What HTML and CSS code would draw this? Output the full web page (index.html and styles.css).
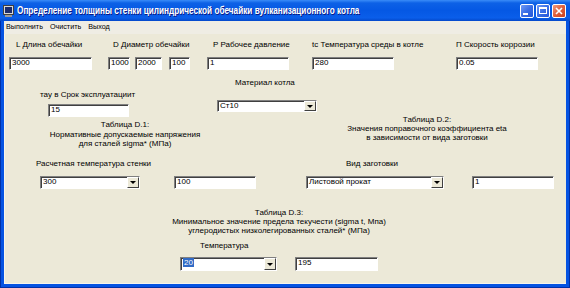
FILE: index.html
```html
<!DOCTYPE html>
<html lang="ru">
<head>
<meta charset="utf-8">
<title>Определение толщины стенки</title>
<link rel="stylesheet" href="styles.css">
</head>
<body>
<div class="window">
  <div class="titlebar">
    <svg class="app-icon" width="11" height="12" viewBox="0 0 11 12">
      <rect x="0.5" y="0.5" width="10" height="9" fill="#d8d8d8" stroke="#404040"/>
      <rect x="2" y="2" width="7" height="6" fill="#1c2c6c"/>
      <rect x="2" y="10" width="7" height="2" fill="#9a9a9a"/>
    </svg>
    <span class="title">Определение толщины стенки цилиндрической обечайки вулканизационного котла</span>
    <div class="caption-buttons">
      <span class="cbtn cbtn-min"><span class="glyph-min"></span></span>
      <span class="cbtn cbtn-max"><span class="glyph-max"></span></span>
      <span class="cbtn cbtn-close">
        <svg width="8" height="8" viewBox="0 0 8 8"><path d="M1 1 L7 7 M7 1 L1 7" stroke="#fff" stroke-width="1.6"/></svg>
      </span>
    </div>
  </div>
  <div class="menubar">
    <span class="menu-item">Выполнить</span>
    <span class="menu-item">Очистить</span>
    <span class="menu-item">Выход</span>
  </div>
  <div class="client">
    <div class="row row-top">
      <div class="group g-len">
        <div class="label">L Длина обечайки</div>
        <div class="field">3000</div>
      </div>
      <div class="group g-dia">
        <div class="label">D Диаметр обечайки</div>
        <div class="fields">
          <div class="field f-d1">1000</div>
          <div class="field f-d2">2000</div>
          <div class="field f-d3">100</div>
        </div>
      </div>
      <div class="group g-press">
        <div class="label">P Рабочее давление</div>
        <div class="field">1</div>
      </div>
      <div class="group g-temp">
        <div class="label">tc Температура среды в котле</div>
        <div class="field">280</div>
      </div>
      <div class="group g-corr">
        <div class="label">П Скорость коррозии</div>
        <div class="field">0.05</div>
      </div>
    </div>

    <div class="row row-mid">
      <div class="col col-left">
        <div class="label lbl-tau">тау в Срок эксплуатациит</div>
        <div class="field f-tau">15</div>
        <div class="note note-d1">Таблица D.1:<br>Нормативные допускаемые напряжения<br>для сталей sigma* (МПа)</div>
      </div>
      <div class="col col-material">
        <div class="label lbl-mat">Материал котла</div>
        <div class="combo c-mat"><span class="val">Ст10</span><span class="drop"></span></div>
      </div>
      <div class="col col-right">
        <div class="note note-d2">Таблица D.2:<br>Значения поправочного коэффициента eta<br>в зависимости от вида заготовки</div>
      </div>
    </div>

    <div class="row row-calc">
      <div class="group g-wall">
        <div class="label">Расчетная температура стенки</div>
        <div class="combo c-wall"><span class="val">300</span><span class="drop"></span></div>
      </div>
      <div class="group g-wallval">
        <div class="label"></div>
        <div class="field">100</div>
      </div>
      <div class="group g-blank">
        <div class="label">Вид заготовки</div>
        <div class="combo"><span class="val">Листовой прокат</span><span class="drop"></span></div>
      </div>
      <div class="group g-eta">
        <div class="label"></div>
        <div class="field">1</div>
      </div>
    </div>

    <div class="note note-d3">Таблица D.3:<br>Минимальное значение предела текучести (sigma t, Мпа)<br>углеродистых низколегированных сталей* (МПа)</div>

    <div class="row row-yield">
      <div class="group g-ytemp">
        <div class="label">Температура</div>
        <div class="combo c-tall"><span class="val"><span class="sel">20</span></span><span class="drop"></span></div>
      </div>
      <div class="group g-yval">
        <div class="label"></div>
        <div class="field f-tall">195</div>
      </div>
    </div>
  </div>
</div>
</body>
</html>
```

FILE: styles.css
```css
* { box-sizing: border-box; margin: 0; padding: 0; }

html, body {
  width: 570px;
  height: 288px;
  overflow: hidden;
}

body {
  font-family: "Liberation Sans", Arial, sans-serif;
  font-size: 8px;
  color: #000;
  background: #fff;
}

.window {
  width: 570px;
  height: 288px;
  display: flex;
  flex-direction: column;
  background: #0553E2;
  padding: 0 4px 4px;
  box-shadow: inset 1px 0 0 #0030A8, inset -1px 0 0 #0030A8, inset 0 -1px 0 #0030A8;
}

/* ---------- title bar ---------- */
.titlebar {
  height: 21px;
  margin: 0 -4px;
  display: flex;
  align-items: center;
  padding-left: 3px;
  background: linear-gradient(#3A8CF8 0, #0D61E6 3px, #0558E4 50%, #0A5EEA 85%, #0448CA 100%);
  flex-shrink: 0;
}

.app-icon {
  flex-shrink: 0;
  margin-right: 3px;
}

.title {
  color: #fff;
  font-weight: bold;
  font-size: 10px;
  white-space: nowrap;
  text-shadow: 1px 1px 0 #0A1883;
  transform: scaleX(0.82);
  transform-origin: left center;
}

.caption-buttons {
  margin-left: auto;
  margin-right: 4px;
  display: flex;
  gap: 2px;
}

.cbtn {
  width: 14px;
  height: 14px;
  border: 1px solid #fff;
  border-radius: 2px;
  background: linear-gradient(135deg, #6F9BF5 0%, #3A6EE6 50%, #2456D8 100%);
  display: flex;
  align-items: center;
  justify-content: center;
}

.cbtn-close {
  background: linear-gradient(135deg, #F09A7E 0%, #E0603C 50%, #C84120 100%);
}

.glyph-min {
  width: 5px;
  height: 2px;
  background: #fff;
  margin: 6px 4px 0 0;
}

.glyph-max {
  width: 8px;
  height: 7px;
  border: 1px solid #fff;
  border-top-width: 2px;
}

/* ---------- menu ---------- */
.menubar {
  height: 13px;
  display: flex;
  gap: 7px;
  padding: 1px 0 0 2px;
  line-height: 10px;
  font-size: 7.2px;
  background: #EFEDE4;
  flex-shrink: 0;
}

/* ---------- client ---------- */
.client {
  flex: 1;
  background: #ECE9D8;
  box-shadow: inset 1px 0 0 #F6F4EC, inset 0 -1px 0 #F6F4EC;
}

.row {
  display: flex;
  align-items: flex-start;
}

.group {
  display: flex;
  flex-direction: column;
  flex-shrink: 0;
}

.label {
  height: 10px;
  line-height: 10px;
  white-space: nowrap;
}

.field,
.combo {
  height: 13px;
  background: #fff;
  border: 1px solid;
  border-color: #808080 #fff #fff #808080;
  box-shadow: inset 1px 1px 0 #404040;
  white-space: nowrap;
  overflow: hidden;
}

.field {
  padding-left: 2px;
  line-height: 10px;
}

.group > .field,
.group > .fields,
.group > .combo {
  margin-top: 7px;
}

.combo {
  display: flex;
}

.combo .val {
  flex: 1;
  padding-left: 2px;
  line-height: 10px;
}

.combo .drop {
  width: 12px;
  flex-shrink: 0;
  background: #ECE9D8;
  border: 1px solid;
  border-color: #fff #404040 #404040 #fff;
  display: flex;
  align-items: center;
  justify-content: center;
}

.combo .drop::after {
  content: "";
  border-left: 3px solid transparent;
  border-right: 3px solid transparent;
  border-top: 3px solid #000;
}

.sel {
  background: #316AC5;
  color: #fff;
  padding: 0 1px;
}

.note {
  white-space: nowrap;
  text-align: center;
  line-height: 9px;
}

/* row 1 */
.row-top {
  padding-top: 6px;
  height: 36px;
}

.g-len { margin-left: 5px; width: 83px; }
.g-len .label { padding-left: 7px; }

.g-dia { margin-left: 16px; width: 82px; }
.g-dia .label { padding-left: 5px; }
.fields { display: flex; }
.f-d1 { width: 22px; }
.f-d2 { width: 27px; margin-left: 5px; }
.f-d3 { width: 21px; margin-left: 7px; }

.g-press { margin-left: 17px; width: 82px; }
.g-press .label { padding-left: 6px; }

.g-temp { margin-left: 23px; width: 82px; }

.g-corr { margin-left: 62px; width: 82px; }

/* row 2 */
.row-mid {
  height: 80px;
}

.col { flex-shrink: 0; }

.col-left { width: 213px; }
.lbl-tau { margin-top: 20px; padding-left: 36px; }
.f-tau { margin-top: 4px; margin-left: 44px; width: 81px; }
.note-d1 { margin-top: 3px; margin-left: 1px; width: 240px; line-height: 9.5px; }

.col-material { width: 100px; }
.lbl-mat { margin-top: 8px; padding-left: 18px; }
.c-mat { margin-top: 12px; height: 12px; }

.col-right { margin-left: 10px; }
.note-d2 { margin-top: 45px; width: 200px; }

/* row 3 */
.row-calc {
  padding-top: 9px;
  height: 39px;
}

.g-wall { margin-left: 32px; width: 104px; }
.c-wall { margin-left: 4px; width: 100px; }

.g-wallval { margin-left: 34px; width: 82px; }

.g-blank { margin-left: 50px; width: 138px; }
.g-blank .label { padding-left: 40px; }

.g-eta { margin-left: 28px; width: 82px; }

/* table D.3 */
.note-d3 {
  margin-top: 19px;
  margin-left: 125px;
  width: 300px;
  height: 27px;
}

/* row 4 */
.row-yield {
  padding-top: 6px;
}

.row-yield .group > .field,
.row-yield .group > .combo {
  margin-top: 6px;
}

.g-ytemp { margin-left: 176px; width: 97px; }
.g-ytemp .label { padding-left: 20px; }

.g-yval { margin-left: 18px; width: 83px; }

.c-tall,
.f-tall {
  height: 14px;
}
```
